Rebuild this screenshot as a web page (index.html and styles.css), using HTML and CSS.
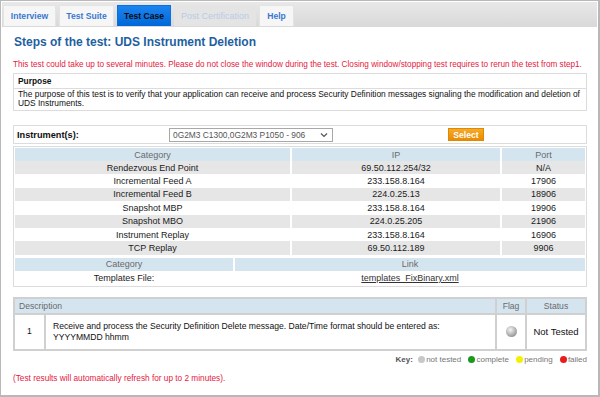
FILE: index.html
```html
<!DOCTYPE html>
<html lang="en">

<head>
  <meta charset="UTF-8">
  <title>Test Case - UDS Instrument Deletion</title>
  <link rel="stylesheet" href="styles.css">
</head>

<body>
  <div class="frame">
    <div class="tabs">
      <a class="tab t-interview">Interview</a>
      <a class="tab t-suite">Test Suite</a>
      <a class="tab t-case active">Test Case</a>
      <a class="tab t-post disabled">Post Certification</a>
      <a class="tab t-help">Help</a>
    </div>

    <div class="content">
      <h1 class="title">Steps of the test: UDS Instrument Deletion</h1>
      <p class="warning">This test could take up to several minutes. Please do not close the window during the test. Closing window/stopping test requires to rerun the test from step1.</p>

      <div class="purpose">
        <div class="purpose-head">Purpose</div>
        <div class="purpose-body">The purpose of this test is to verify that your application can receive and process Security Definition messages signaling the modification and deletion of UDS Instruments.</div>
      </div>

      <div class="instrument">
        <div class="instrument-label">Instrument(s):</div>
        <div class="select-box">
          <span>0G2M3 C1300,0G2M3 P1050 - 906</span>
          <svg width="8" height="6" viewBox="0 0 8 6"><path d="M1 1.5 L4 4.5 L7 1.5" fill="none" stroke="#555" stroke-width="1.2"/></svg>
        </div>
        <button class="btn-select">Select</button>
      </div>

      <div class="conn">
        <table class="grid">
          <thead>
            <tr><th class="c-cat">Category</th><th class="c-ip">IP</th><th>Port</th></tr>
          </thead>
          <tbody>
            <tr><td>Rendezvous End Point</td><td>69.50.112.254/32</td><td>N/A</td></tr>
            <tr><td>Incremental Feed A</td><td>233.158.8.164</td><td>17906</td></tr>
            <tr><td>Incremental Feed B</td><td>224.0.25.13</td><td>18906</td></tr>
            <tr><td>Snapshot MBP</td><td>233.158.8.164</td><td>19906</td></tr>
            <tr><td>Snapshot MBO</td><td>224.0.25.205</td><td>21906</td></tr>
            <tr><td>Instrument Replay</td><td>233.158.8.164</td><td>16906</td></tr>
            <tr><td>TCP Replay</td><td>69.50.112.189</td><td>9906</td></tr>
          </tbody>
        </table>
        <table class="grid links">
          <thead>
            <tr><th class="c-cat2">Category</th><th>Link</th></tr>
          </thead>
          <tbody>
            <tr><td>Templates File:</td><td><a href="#">templates_FixBinary.xml</a></td></tr>
          </tbody>
        </table>
      </div>

      <table class="steps">
        <thead>
          <tr><th colspan="2" class="left">Description</th><th class="c-flag">Flag</th><th class="c-status">Status</th></tr>
        </thead>
        <tbody>
          <tr>
            <td class="c-num">1</td>
            <td class="c-desc">Receive and process the Security Definition Delete message. Date/Time format should be entered as: YYYYMMDD hhmm</td>
            <td class="c-flag"><span class="ball"></span></td>
            <td class="c-status">Not Tested</td>
          </tr>
        </tbody>
      </table>

      <div class="key">
        <b>Key:</b>
        <span class="dot gray"></span>not tested
        <span class="dot green"></span>complete
        <span class="dot yellow"></span>pending
        <span class="dot red"></span>failed
      </div>

      <p class="refresh">(Test results will automatically refresh for up to 2 minutes).</p>
    </div>
  </div>
</body>

</html>
```

FILE: styles.css
```css
* {
  margin: 0;
  padding: 0;
  box-sizing: border-box;
}

body {
  font-family: 'Liberation Sans', Arial, sans-serif;
  font-size: 8.2px;
  color: #111;
  background: white;
}

.frame {
  width: 600px;
  height: 397px;
  border: 1px solid #b8b8b8;
  border-right-width: 2px;
  border-bottom-width: 2px;
  padding: 1px;
}

.tabs {
  display: flex;
  gap: 3px;
  padding: 3px 0 0 1px;
  height: 25px;
  background: linear-gradient(#e8e8e8, #d9d9d9);
}

.tab {
  display: flex;
  align-items: center;
  justify-content: center;
  height: 21px;
  background: #f6f6f6;
  color: #3a78d0;
  font-weight: bold;
  font-size: 8.6px;
  border: 1px solid #e4e4e4;
  border-bottom: none;
}

.t-interview { width: 53px; }
.t-suite { width: 55px; }
.t-case { width: 54px; }
.t-post { width: 82px; }
.t-help { width: 35px; }

.tab.active {
  background: linear-gradient(#1c84ee, #0066d8);
  color: #0a0a0a;
  border-color: #0a6fe0;
}

.tab.disabled {
  background: #e4e4e4;
  color: #b9cbe4;
  font-weight: normal;
  font-size: 9px;
}

.content {
  padding: 0 10px 0 11px;
}

.title {
  font-size: 12px;
  color: #1f5f9f;
  margin: 8px 0 0 1px;
  line-height: 14px;
}

.warning {
  color: #e42040;
  margin-top: 11px;
  line-height: 10px;
}

.purpose {
  margin-top: 3px;
  border: 1px solid #dcdcdc;
}

.purpose-head {
  font-weight: bold;
  font-size: 8.4px;
  padding: 3px 4px 2px;
  border-bottom: 1px solid #dcdcdc;
  line-height: 9px;
}

.purpose-body {
  font-size: 8.4px;
  padding: 1px 4px 2px;
  line-height: 9px;
}

.instrument {
  display: flex;
  align-items: center;
  margin-top: 14px;
  height: 19px;
  border: 1px solid #dcdcdc;
  padding: 0 3px;
}

.instrument-label {
  font-weight: bold;
  font-size: 9.2px;
  width: 152px;
}

.select-box {
  display: flex;
  align-items: center;
  justify-content: space-between;
  width: 164px;
  height: 14px;
  border: 1px solid #a8a8a8;
  padding: 0 4px 0 3px;
  color: #555;
  font-size: 8.4px;
}

.btn-select {
  margin-left: 115px;
  width: 36px;
  height: 13px;
  border: 1px solid #e08800;
  background: linear-gradient(#f5aa2a, #ea8c00);
  color: white;
  font-family: inherit;
  font-size: 8.6px;
  font-weight: bold;
}

.conn {
  margin-top: 2px;
  border: 1px solid #dcdcdc;
  padding: 1px;
}

.grid {
  width: 100%;
  border-collapse: collapse;
  text-align: center;
  font-size: 9px;
}

.grid th {
  background: #d5e5ef;
  color: #6a6a6a;
  font-weight: normal;
  height: 13px;
  border-right: 2px solid white;
}

.grid th:last-child {
  border-right: none;
}

.grid td {
  height: 13.4px;
  border-right: 2px solid white;
  color: #1a1a1a;
}

.grid td:last-child {
  border-right: none;
}

.grid tbody tr:nth-child(odd) td {
  background: #e6e6e6;
}

.grid .c-cat {
  width: 276px;
}

.grid .c-ip {
  width: 210px;
}

.links {
  margin-top: 3px;
}

.links .c-cat2 {
  width: 219px;
}

.links tbody tr td {
  background: white !important;
  height: 14px;
}

.links a {
  color: #333;
}

.steps {
  width: 100%;
  margin-top: 10px;
  border-collapse: collapse;
  border: 2px solid #d0d0d0;
  font-size: 8.6px;
}

.steps th {
  background: #d5e5ef;
  color: #6a6a6a;
  font-weight: normal;
  height: 16px;
  border: 2px solid #d0d0d0;
  text-align: center;
}

.steps th.left {
  text-align: left;
  padding-left: 4px;
}

.steps td {
  height: 36px;
  border: 2px solid #d0d0d0;
  vertical-align: middle;
  line-height: 11px;
}

.steps .c-num {
  width: 31px;
  text-align: center;
}

.steps .c-desc {
  padding: 0 8px 0 7px;
}

.steps .c-flag {
  width: 30px;
  text-align: center;
}

.steps .c-status {
  width: 60px;
  text-align: center;
}

.steps td.c-status {
  font-size: 9.5px;
}

.ball {
  display: inline-block;
  width: 11px;
  height: 11px;
  border-radius: 50%;
  background: radial-gradient(circle at 40% 35%, #f4f4f4, #a8a8a8 60%, #777);
  vertical-align: middle;
}

.key {
  text-align: right;
  margin-top: 4px;
  color: #777;
  line-height: 10px;
  font-size: 8px;
}

.key b {
  color: #555;
}

.dot {
  display: inline-block;
  width: 7px;
  height: 7px;
  border-radius: 50%;
  margin: 0 1px 0 5px;
  vertical-align: -1px;
}

.dot.gray {
  background: #c8c8c8;
  margin-left: 3px;
}

.dot.green {
  background: #1a9a1a;
}

.dot.yellow {
  background: #f2f200;
}

.dot.red {
  background: #e81c1c;
}

.refresh {
  color: #e42040;
  margin-top: 9px;
  line-height: 10px;
  font-size: 8.25px;
}
```
